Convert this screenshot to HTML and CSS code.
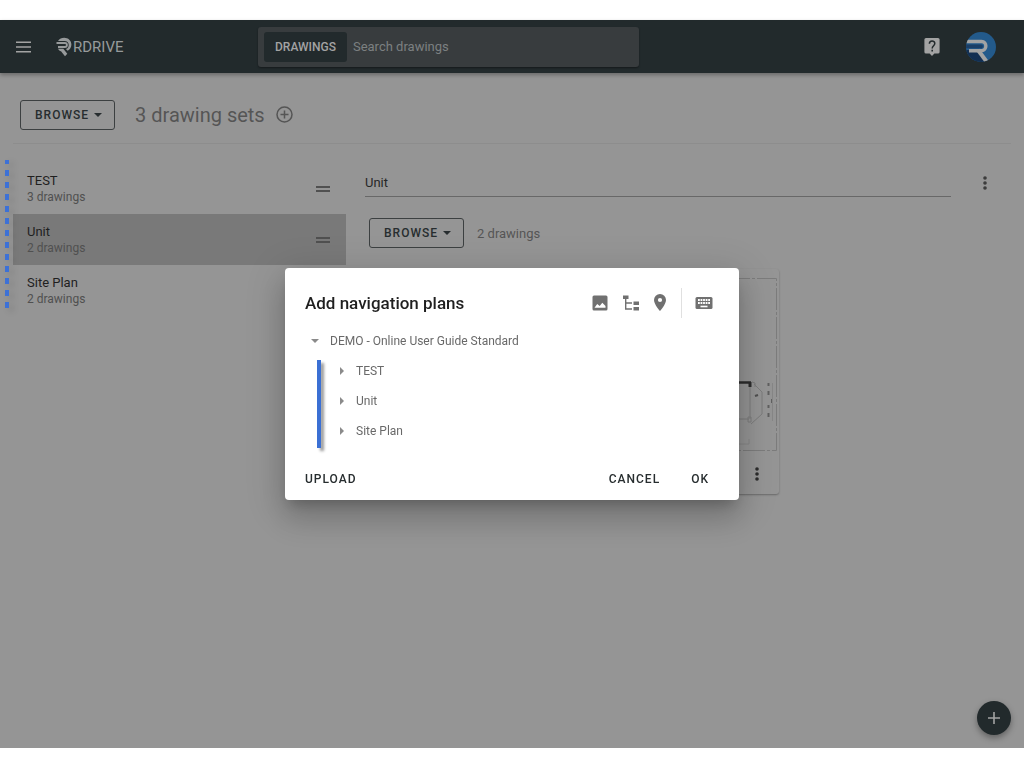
FILE: index.html
```html
<!DOCTYPE html>
<html lang="en">
<head>
    <meta charset="utf-8">
    <meta name="viewport" content="width=device-width, initial-scale=1">
    <title>RDRIVE - Drawings</title>
    <link rel="stylesheet" href="styles.css">
</head>
<body>
<div class="app">
    <header class="header">
        <div class="header-left">
            <button class="icon-btn" aria-label="Menu">
                <svg width="15" height="12" viewBox="0 0 15 12"><path d="M0 1.2h15M0 6h15M0 10.8h15" stroke="currentColor" stroke-width="1.6"/></svg>
            </button>
            <a class="logo" href="#">
                <svg width="16" height="20" viewBox="0 0 16 20">
                    <path d="M2 4C3.500 1.800 5.500.7 8.200.7c4 0 7.200 2.800 7.200 6.900 0 2.900-1.500 5.200-3.800 6.200l-1.700-1.700c2-.6 2.800-2.200 2.800-4.100C12.700 5.500 11 4 8.500 4z" fill="currentColor"/>
                    <path d="M.5 6h8.300c2.900 0 2.900 4 0 4H2" fill="none" stroke="currentColor" stroke-width="1.800"/>
                    <path d="M2 11.800h5.300l4 5L9 19.300l-4-5C3.500 14 2.600 13 2 11.800z" fill="currentColor"/>
                </svg>
                <span class="logo-text">RDRIVE</span>
            </a>
        </div>
        <div class="search">
            <button class="search-scope">DRAWINGS</button>
            <input class="search-input" type="text" placeholder="Search drawings" aria-label="Search drawings">
        </div>
        <div class="header-right">
            <button class="icon-btn" aria-label="Help">
                <svg width="16" height="18" viewBox="0 0 16 18">
                    <path d="M2 0h12a1.600 1.600 0 0 1 1.600 1.600v12.400a1.600 1.600 0 0 1-1.600 1.600h-3.600L8 18l-2.400-2.400H2A1.600 1.600 0 0 1 .4 14V1.600A1.600 1.600 0 0 1 2 0z" fill="currentColor"/>
                    <path d="M5.400 5.800C5.400 2.100 10.800 2.200 10.800 5.600c0 2-2.600 2.300-2.600 4.800" fill="none" stroke="#222a2c" stroke-width="1.500"/>
                    <path d="M7.400 11.800h1.600v1.600H7.400z" fill="#222a2c"/>
                </svg>
            </button>
            <button class="icon-btn" aria-label="Account">
                <svg width="30" height="30" viewBox="0 0 30 30">
                    <defs><clipPath id="avatar-clip"><circle cx="15" cy="15" r="15"/></clipPath></defs>
                    <g clip-path="url(#avatar-clip)">
                        <path d="M0 0h30v30H0z" fill="#235a8b"/>
                        <path d="M0 18h12l9 12H0z" fill="#132f52"/>
                        <path d="M3 12.400h12c2.500 0 2.500 3.800 0 3.800H0v-3.800z" fill="#1b3e66"/>
                        <path d="M0 9.500h15.500c5.800 0 5.800 9.200 0 9.200H3" fill="none" stroke="#a3a3a3" stroke-width="3.400"/>
                        <path d="M12 18l8.500 11.500" fill="none" stroke="#a3a3a3" stroke-width="4"/>
                    </g>
                </svg>
            </button>
        </div>
    </header>

    <div class="toolbar">
        <button class="browse-btn">BROWSE <span class="caret"></span></button>
        <h1 class="toolbar-title">3 drawing sets</h1>
        <button class="icon-btn" aria-label="Add drawing set">
            <svg width="17" height="17" viewBox="0 0 17 17" fill="none" stroke="currentColor" stroke-width="1.500"><circle cx="8.500" cy="8.500" r="7.500"/><path d="M8.500 4.500v8M4.500 8.500h8"/></svg>
        </button>
    </div>

    <div class="content">
        <ul class="set-list">
            <li class="set-item">
                <a class="set-link" href="#"><span class="set-name">TEST</span><span class="set-count">3 drawings</span></a>
                <span class="drag-handle"></span>
            </li>
            <li class="set-item active">
                <a class="set-link" href="#"><span class="set-name">Unit</span><span class="set-count">2 drawings</span></a>
                <span class="drag-handle"></span>
            </li>
            <li class="set-item">
                <a class="set-link" href="#"><span class="set-name">Site Plan</span><span class="set-count">2 drawings</span></a>
                <span class="drag-handle"></span>
            </li>
        </ul>

        <main class="set-detail">
            <div class="name-row">
                <input class="name-input" type="text" value="Unit" aria-label="Drawing set name">
                <button class="icon-btn" aria-label="Drawing set options">
                    <svg width="4" height="14" viewBox="0 0 4 14" fill="currentColor"><circle cx="2" cy="2" r="1.800"/><circle cx="2" cy="7" r="1.800"/><circle cx="2" cy="12" r="1.800"/></svg>
                </button>
            </div>
            <div class="detail-toolbar">
                <button class="browse-btn">BROWSE <span class="caret"></span></button>
                <span class="detail-count">2 drawings</span>
            </div>
            <div class="cards">
                <div class="card">
                    <div class="card-thumb"></div>
                    <div class="card-footer"></div>
                </div>
                <div class="card">
                    <div class="card-thumb">
                        <svg width="200" height="185" viewBox="0 0 200 185" fill="none" stroke="#7c7c7c">
                            <path d="M4 9.500h193.500v172H4z" stroke-dasharray="22 2 3 2"/>
                            <path d="M120 113.500h52" stroke="#2c2c2c" stroke-width="2.500"/>
                            <path d="M171 113v5" stroke="#2c2c2c" stroke-width="3"/>
                            <path d="M171 118v32M173 113l3 1v4M175 115l8 8v22l-11 10M150 150h20M169 148h3v5h-3z"/>
                            <path d="M176 127l3-1" stroke="#505050" stroke-width="2"/>
                            <path d="M189.500 114v38" stroke="#606060" stroke-width="2" stroke-dasharray="3 5 4 10"/>
                            <path d="M193 130v4" stroke="#606060" stroke-width="2"/>
                            <path d="M193.500 114v38M150 175h20v-5" stroke="#868686"/>
                        </svg>
                    </div>
                    <div class="card-footer">
                        <button class="icon-btn" aria-label="Drawing options">
                            <svg width="4" height="14" viewBox="0 0 4 14" fill="currentColor"><circle cx="2" cy="2" r="1.800"/><circle cx="2" cy="7" r="1.800"/><circle cx="2" cy="12" r="1.800"/></svg>
                        </button>
                    </div>
                </div>
            </div>
        </main>
        <div class="drop-marker"></div>
    </div>

    <button class="fab" aria-label="Add">
        <svg width="12" height="12" viewBox="0 0 12 12"><path d="M6 0v12M0 6h12" stroke="currentColor" stroke-width="1.600"/></svg>
    </button>
</div>

<!-- Navigation plans dialog -->
<div class="dialog-wrap">
    <div class="dialog" role="dialog" aria-labelledby="dialog-title">
        <div class="dialog-header">
            <h2 class="dialog-title" id="dialog-title">Add navigation plans</h2>
            <div class="dialog-tools">
                <button class="icon-btn" aria-label="Images">
                    <svg width="16" height="16" viewBox="0 0 16 16"><path d="M2 .5h12A1.500 1.500 0 0 1 15.500 2v12a1.500 1.500 0 0 1-1.500 1.500H2A1.500 1.500 0 0 1 .5 14V2A1.500 1.500 0 0 1 2 .5zM2.500 12.700h11V11L10.300 7.700 7.700 11 5.200 9z" fill="currentColor" fill-rule="evenodd"/></svg>
                </button>
                <button class="icon-btn" aria-label="Tree">
                    <svg width="16" height="16" viewBox="0 0 16 16"><path d="M0 .5h5.500v3.500H0zM10.500 6.500H16V10h-5.500zM10.500 12H16v3.500h-5.500z" fill="currentColor"/><path d="M2.700 4v10H9M2.700 8H9" fill="none" stroke="currentColor" stroke-width="1.400"/></svg>
                </button>
                <button class="icon-btn" aria-label="Location">
                    <svg width="12" height="17" viewBox="0 0 12 17"><path d="M6 0a6 6 0 0 0-6 6c0 4.400 6 11 6 11s6-6.600 6-11a6 6 0 0 0-6-6zm0 8.100A2.100 2.100 0 1 1 6 3.900a2.100 2.100 0 0 1 0 4.200z" fill="currentColor"/></svg>
                </button>
                <span class="divider"></span>
                <button class="icon-btn keyboard" aria-label="Keyboard">
                    <svg width="18" height="12" viewBox="0 0 18 12"><rect x=".5" width="17" height="12" rx="1.500" fill="currentColor"/><path d="M3 3h12M3 6h12" stroke="#fff" stroke-width="2" stroke-dasharray="1.800 .75"/><path d="M5.500 9.500h7" stroke="#fff" stroke-width="1.600"/></svg>
                </button>
            </div>
        </div>
        <div class="tree">
            <div class="tree-row"><span class="arrow arrow-down"></span>DEMO - Online User Guide Standard</div>
            <ul class="tree-children">
                <li class="tree-row"><span class="arrow"></span>TEST</li>
                <li class="tree-row"><span class="arrow"></span>Unit</li>
                <li class="tree-row"><span class="arrow"></span>Site Plan</li>
            </ul>
        </div>
        <div class="dialog-actions">
            <button class="text-btn">UPLOAD</button>
            <button class="text-btn push">CANCEL</button>
            <button class="text-btn">OK</button>
        </div>
    </div>
</div>
</body>
</html>
```
FILE: styles.css
```css
* {
    box-sizing: border-box;
}
body {
    margin: 0;
    padding: 20px 0;
    background: #fff;
    font-family: Roboto, "Liberation Sans", sans-serif;
    font-size: 13px;
    color: #222;
}
button, input {
    font-family: inherit;
    color: inherit;
}
svg {
    display: block;
}
ul {
    list-style: none;
    margin: 0;
    padding: 0;
}
.app {
    position: relative;
    min-height: calc(100vh - 40px);
    background: #959595;
}
.icon-btn {
    display: flex;
    padding: 0;
    border: none;
    background: none;
    color: inherit;
    cursor: pointer;
}

/* Header */
.header {
    display: flex;
    align-items: center;
    height: 53px;
    padding: 0 28px 0 16px;
    background: #222a2c;
    color: #a3a3a3;
    box-shadow: 0 2px 4px rgba(0, 0, 0, 0.3);
}
.header-left {
    display: flex;
    align-items: center;
    gap: 25px;
    width: 242px;
}
.logo {
    display: flex;
    align-items: center;
    gap: 1px;
    color: #979a9b;
    text-decoration: none;
}
.logo-text {
    font-size: 15px;
}
.search {
    display: flex;
    align-items: center;
    flex: 0 1 381px;
    height: 40px;
    padding: 0 6px;
    gap: 6px;
    border-radius: 3px;
    background: #383c3e;
    box-shadow: 0 1px 2px rgba(0, 0, 0, 0.4);
}
.search-scope {
    height: 30px;
    padding: 0 11px;
    border: none;
    border-radius: 3px;
    background: #222a2c;
    font-size: 12px;
    font-weight: 500;
}
.search-input {
    flex: 1;
    min-width: 0;
    padding: 0;
    border: none;
    background: none;
    font-size: 13px;
}
.search-input::placeholder {
    color: #7c8081;
    opacity: 1;
}
.header-right {
    display: flex;
    align-items: center;
    gap: 26px;
    margin-left: auto;
}

/* Toolbar */
.toolbar {
    display: flex;
    align-items: center;
    height: 71px;
    margin: 0 13px;
    padding: 13px 7px 0;
    border-bottom: 1px solid #8d8d8d;
    color: #555;
}
.toolbar-title {
    margin: 0 11px 0 20px;
    font-size: 20px;
    font-weight: 400;
}
.browse-btn {
    display: flex;
    align-items: center;
    gap: 5px;
    height: 30px;
    padding: 0 12px 0 14px;
    border: 1px solid #3c4041;
    border-radius: 3px;
    background: none;
    color: #272d2f;
    font-size: 12px;
    font-weight: 500;
    letter-spacing: 1px;
    cursor: pointer;
}
.caret {
    border: 4px solid transparent;
    border-top-color: currentColor;
    border-bottom: none;
}

/* Drawing sets */
.content {
    position: relative;
    display: flex;
    padding: 19px 13px;
}
.set-list {
    flex: 0 0 333px;
}
.set-item {
    display: flex;
    align-items: center;
    justify-content: space-between;
    height: 51px;
    padding: 0 16px 0 14px;
}
.set-item.active {
    background: #797979;
}
.set-link {
    color: #1f1f1f;
    text-decoration: none;
}
.set-name {
    display: block;
    font-size: 13px;
    line-height: 17px;
}
.set-count {
    display: block;
    color: #505050;
    font-size: 12px;
    line-height: 16px;
}
.drag-handle {
    width: 14px;
    height: 6px;
    border: solid #505050;
    border-width: 2px 0;
}
/* Dashed marker over the left edge of the list */
.drop-marker {
    position: absolute;
    left: 5px;
    top: 16px;
    width: 4px;
    height: 151px;
    background: repeating-linear-gradient(#3d71d6 0 4px, transparent 4px 10px, #3d71d6 10px 12px);
    filter: drop-shadow(4px 3px 3px rgba(0, 0, 0, 0.15));
}

/* Set detail */
.set-detail {
    flex: 1;
    min-width: 0;
    padding: 6px 24px 0 19px;
}
.name-row {
    display: flex;
    align-items: center;
    gap: 32px;
    color: #3c3c3c;
}
.name-input {
    flex: 1;
    min-width: 0;
    height: 28px;
    padding: 0;
    border: none;
    border-bottom: 1px solid #686868;
    background: none;
    color: #272727;
    font-size: 13px;
}
.detail-toolbar {
    display: flex;
    align-items: center;
    gap: 13px;
    margin: 21px 4px;
    color: #555;
}
.detail-count {
    font-size: 13px;
}
.cards {
    display: flex;
    flex-wrap: wrap;
    gap: 10px;
    padding-left: 4px;
}
.card {
    width: 200px;
    border-radius: 3px;
    background: #959595;
    box-shadow: 0 1px 2px rgba(0, 0, 0, 0.3);
}
.card-thumb {
    height: 185px;
}
.card-footer {
    display: flex;
    align-items: center;
    justify-content: flex-end;
    height: 40px;
    padding: 0 20px;
    color: #2c2c2c;
}
.fab {
    position: absolute;
    right: 13px;
    bottom: 13px;
    display: flex;
    align-items: center;
    justify-content: center;
    width: 34px;
    height: 34px;
    padding: 0;
    border: none;
    border-radius: 50%;
    background: #222a2c;
    color: #a3a3a3;
    box-shadow: 0 3px 6px rgba(0, 0, 0, 0.35);
}

/* Dialog */
.dialog-wrap {
    position: fixed;
    inset: 0;
    display: flex;
    align-items: center;
    justify-content: center;
}
.dialog {
    width: 454px;
    padding: 19px 20px 6px;
    border-radius: 4px;
    background: #fff;
    box-shadow: 0 9px 12px -5px rgba(0, 0, 0, 0.2), 0 19px 30px 2px rgba(0, 0, 0, 0.14), 0 7px 37px 6px rgba(0, 0, 0, 0.12);
}
.dialog-header {
    display: flex;
    align-items: center;
    justify-content: space-between;
    height: 31px;
}
.dialog-title {
    margin: 0;
    color: #1f1f1f;
    font-size: 17px;
    font-weight: 500;
}
.dialog-tools {
    display: flex;
    align-items: center;
    gap: 15px;
    padding-right: 6px;
    color: #707070;
}
.divider {
    width: 1px;
    height: 30px;
    background: #e0e0e0;
}
.keyboard {
    margin-left: -2px;
}
.tree {
    padding: 8px 0 0 6px;
    color: #696969;
    font-size: 12px;
}
.tree-row {
    display: flex;
    align-items: center;
    height: 30px;
}
.tree-children {
    position: relative;
    padding-left: 29px;
}
.tree-children::before {
    content: "";
    position: absolute;
    left: 6px;
    top: 4px;
    bottom: -2px;
    width: 4px;
    background: #3b70d4;
    box-shadow: 3px 3px 3px rgba(0, 0, 0, 0.4);
}
.arrow {
    margin-right: 12px;
    border: 4px solid transparent;
    border-left-color: #8a8a8a;
    border-right: none;
}
.arrow-down {
    margin: 0 11px 0 0;
    border: 4px solid transparent;
    border-top-color: #8a8a8a;
    border-bottom: none;
}
.dialog-actions {
    display: flex;
    align-items: center;
    margin-top: 18px;
}
.text-btn {
    height: 30px;
    padding: 0;
    border: none;
    background: none;
    color: #272d2f;
    font-size: 12px;
    font-weight: 500;
    letter-spacing: 1px;
    cursor: pointer;
}
.push {
    margin: 0 31px 0 auto;
}
.text-btn:last-child {
    margin-right: 10px;
}
```
